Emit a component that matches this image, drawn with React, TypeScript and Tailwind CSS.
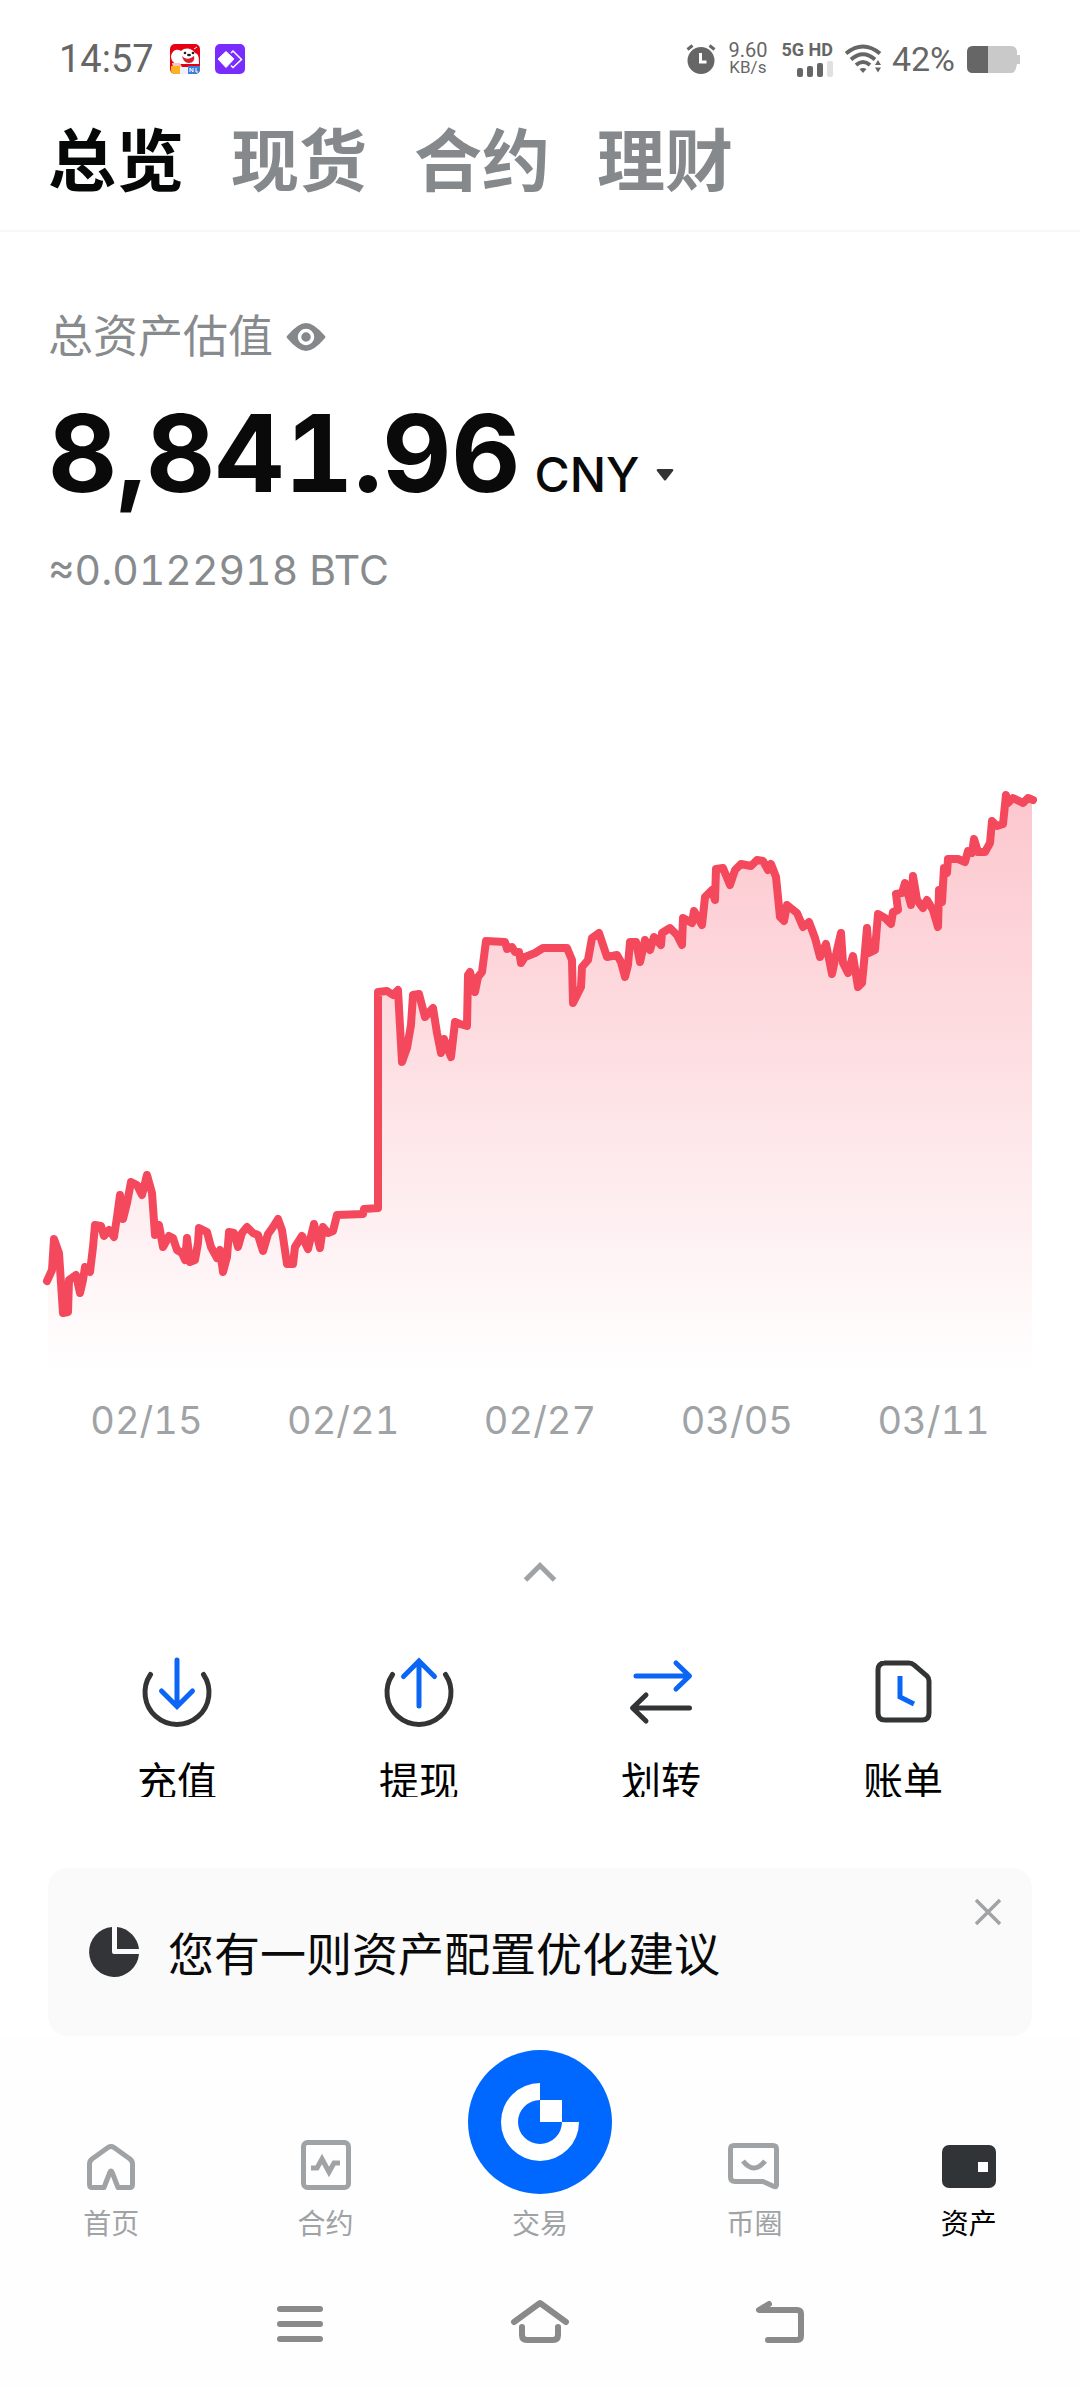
import { useState } from "react";
import type { ReactNode } from "react";

const tabs = ["总览", "现货", "合约", "理财"];
const dates = ["02/15", "02/21", "02/27", "03/05", "03/11"];

// x,y pairs on a 1080 x 616 canvas
const trend =
    "47,521 52,510 54,479 59,493 63,553 68,552 69,520 76,515 80,533 83,520 85,507 90,512 93,487 95,465 101,466 " +
    "104,476 109,470 114,477 117,457 120,435 123,459 127,443 131,422 137,425 142,435 147,415 152,433 155,475 " +
    "159,465 163,487 169,476 173,478 177,490 182,493 185,500 187,478 190,502 195,500 198,483 199,468 207,472 " +
    "211,487 217,498 220,490 223,512 227,497 229,472 234,473 238,487 242,473 247,467 253,473 258,475 263,491 " +
    "268,474 273,467 278,459 282,470 287,504 293,504 295,487 302,476 308,489 314,464 320,488 323,467 328,473 " +
    "333,471 337,455 363,454 364,449 378,448 378,232 387,231 393,235 398,230 402,302 407,288 411,265 413,235 " +
    "419,234 425,257 433,248 437,273 441,293 444,279 451,297 455,262 460,264 467,266 468,215 470,212 475,232 " +
    "478,217 482,212 486,181 505,182 507,189 512,187 515,192 519,192 521,203 525,197 535,193 543,188 567,188 " +
    "572,200 573,243 581,227 582,207 588,200 592,178 599,173 607,197 617,195 621,202 625,217 628,205 630,182 " +
    "636,182 640,202 645,180 650,190 654,177 661,185 662,173 670,168 677,175 682,185 683,158 692,163 694,151 " +
    "702,165 705,137 712,130 715,140 716,109 723,108 730,125 735,110 741,104 751,106 757,100 763,101 768,110 " +
    "771,104 776,117 780,157 784,161 787,145 797,153 803,167 809,162 815,178 820,197 826,184 832,214 837,190 " +
    "841,173 843,203 848,213 853,196 858,227 862,223 864,202 867,168 869,193 875,190 878,154 885,158 891,164 " +
    "893,152 898,150 896,134 902,133 905,123 911,145 913,116 917,140 923,148 927,140 933,150 938,167 939,130 " +
    "942,142 944,108 947,113 948,99 958,99 965,102 968,91 972,93 974,79 978,92 985,92 990,83 992,61 997,66 " +
    "1003,64 1006,35 1008,43 1013,38 1023,43 1028,38 1033,40";

function StatusBar() {
    return (
        <div className="flex h-[118px] items-center justify-between pr-[60px] pl-[59px] font-[Roboto,sans-serif] text-[#666666]">
            <div className="flex items-center">
                <span className="text-[38px]">14:57</span>
                <svg className="ml-4 size-[30px]" viewBox="0 0 30 30">
                    <rect width="30" height="30" rx="5" fill="#e60012" />
                    <path d="M1 12C3 5 8 5 11 7C15 3 22 4 25 9C29 10 29 14 29 20H7C3 19 1 16 1 12Z" fill="#fff" />
                    <path d="M2 19h8l2 4H3z" fill="#f3c7bd" />
                    <path d="M12 12c4 4 8 3 12 0c1 4-1 7-5 7s-6-3-7-7z" fill="#d8212b" />
                    <circle cx="15" cy="9" r="1.3" fill="#222" />
                    <circle cx="23" cy="9" r="1.3" fill="#222" />
                    <ellipse cx="19" cy="11" rx="2" ry="1.3" fill="#222" />
                    <path d="M24 5l3-2" stroke="#fff" strokeWidth="1" />
                    <path d="M1 22h9v8H5q-4 0-4-4z" fill="#fbb321" />
                    <path d="M10 23h8v7h-8z" fill="#eef3fb" />
                    <path d="M18 22h12v3q0 5-5 5h-7z" fill="#3f7fd8" />
                    <path d="M20 28v-4l3 4v-4M26 24v4h2" stroke="#fff" strokeWidth="1" fill="none" />
                </svg>
                <svg className="ml-[15px] size-[30px]" viewBox="0 0 30 30">
                    <rect width="30" height="30" rx="5" fill="#7a2cff" />
                    <path d="M11 7.500L19 15L11 23.500L3 15Z" fill="#fff" stroke="#fff" strokeLinejoin="round" />
                    <path d="M16 9l2-2 8.500 8.500-8.500 8-2-2" fill="none" stroke="#fff" strokeWidth="1.500" />
                </svg>
            </div>
            <div className="flex items-center">
                <svg className="h-[30px] w-[30px]" viewBox="0 0 30 30">
                    <circle cx="15" cy="16.500" r="13.500" fill="#666" />
                    <path d="M1.500 5.500L6.500 1.500M28.500 5.500L23.500 1.500" stroke="#666" strokeWidth="3" />
                    <path d="M14.500 9v9h6" fill="none" stroke="#fff" strokeWidth="3" />
                </svg>
                <div className="ml-3 flex flex-col items-center">
                    <span className="text-[20px] leading-[17px]">9.60</span>
                    <span className="text-[17px] leading-[17px]">KB/s</span>
                </div>
                <div className="ml-[14px] flex flex-col items-end">
                    <span className="text-[18px] leading-4 font-bold">5G HD</span>
                    <svg className="mt-[3px] h-4 w-9" viewBox="0 0 36 16">
                        <rect x="0" y="7" width="6" height="9" rx="2" fill="#666" />
                        <rect x="10" y="5" width="6" height="11" rx="2" fill="#666" />
                        <rect x="20" y="2" width="6" height="14" rx="2" fill="#666" />
                        <rect x="30" y="0" width="6" height="16" rx="2" fill="#e0e0e0" />
                    </svg>
                </div>
                <svg className="ml-3 h-[30px] w-[37px]" viewBox="0 0 37 30">
                    <g fill="none" stroke="#666" strokeWidth="4">
                        <path d="M1 9.500Q18 -4.500 35 9.500" />
                        <path d="M6 15.500Q18 5 30 15.500" />
                        <path d="M11 21Q18 15 25 21" />
                    </g>
                    <path d="M14.500 25Q18 23 21.500 25L18 29Z" fill="#666" />
                    <path d="M33 16l3 5h-6zM33 28.500l3-5h-6z" fill="#666" />
                </svg>
                <span className="ml-[10px] text-[34px]">42%</span>
                <svg className="ml-3 h-[27px] w-[53px]" viewBox="0 0 53 27">
                    <path d="M6 0H44Q49 0 50 5V9H53V18H50L49 22Q48 27 44 27H6Q0 27 0 21V6Q0 0 6 0Z" fill="#c9c9c9" />
                    <path d="M6 0H21V27H6Q0 27 0 21V6Q0 0 6 0Z" fill="#666" />
                </svg>
            </div>
        </div>
    );
}

function Chart() {
    return (
        <svg className="mt-40 block w-full" viewBox="0 0 1080 616">
            <defs>
                <linearGradient id="fade" x1="0" y1="35" x2="0" y2="616" gradientUnits="userSpaceOnUse">
                    <stop offset="0" stopColor="#f5465d" stopOpacity="0.3" />
                    <stop offset="0.4" stopColor="#f5465d" stopOpacity="0.19" />
                    <stop offset="1" stopColor="#f5465d" stopOpacity="0" />
                </linearGradient>
            </defs>
            <polygon points={`48,616 48,521 ${trend.replace("1033,40", "1032,40")} 1032,616`} fill="url(#fade)" />
            <polyline
                points={trend}
                fill="none"
                stroke="#f4485d"
                strokeWidth="8"
                strokeLinecap="round"
                strokeLinejoin="round"
            />
        </svg>
    );
}

function Action({ label, children }: { label: string; children: ReactNode }) {
    return (
        <button className="flex flex-col items-center">
            <svg className="size-[72px]" viewBox="0 0 72 72" fill="none" strokeWidth="5">
                {children}
            </svg>
            <span className="mt-7 h-[41px] overflow-hidden text-[40px] leading-[52px] text-black">{label}</span>
        </button>
    );
}

function NavItem({ label, active, children }: { label: string; active?: boolean; children: ReactNode }) {
    return (
        <a href="#" className="flex flex-col items-center gap-[14px]">
            <svg className="size-14" viewBox="0 0 56 56" fill="none" stroke="#a0a3a5" strokeWidth="5">
                {children}
            </svg>
            <span className={active ? "text-[28px] leading-8 text-black" : "text-[28px] leading-8 text-[#a0a3a5]"}>
                {label}
            </span>
        </a>
    );
}

export default function App() {
    const [tab, setTab] = useState("总览");
    const [currency, setCurrency] = useState("CNY");

    return (
        <div className="bg-white font-['Inter','Noto_Sans_CJK_SC',sans-serif] text-[#0a0a0a]">
            <StatusBar />

            <div className="flex gap-[47px] border-b-2 border-[#f8f8f8] pb-[26px] pl-12">
                {tabs.map((t) => (
                    <button
                        key={t}
                        onClick={() => setTab(t)}
                        className={
                            t === tab
                                ? "text-[68px] leading-[86px] font-bold text-[#060807]"
                                : "text-[68px] leading-[86px] font-bold text-[#85898c]"
                        }
                    >
                        {t}
                    </button>
                ))}
            </div>

            <div className="pt-[75px] pl-12">
                <div className="flex items-center">
                    <span className="text-[45px] leading-[60px] text-[#888b8d]">总资产估值</span>
                    <button aria-label="显示资产" className="ml-[13px]">
                        <svg className="h-7 w-10" viewBox="0 0 40 28">
                            <path d="M1 13Q12 0 20 0T39 13Q40 14 39 15Q28 28 20 28T1 15Q0 14 1 13Z" fill="#85888a" />
                            <circle cx="20" cy="14" r="6.500" fill="#85888a" stroke="#fff" strokeWidth="3.500" />
                        </svg>
                    </button>
                </div>
                <div className="mt-[26px] flex items-baseline">
                    <span className="text-[107px] leading-[120px] font-bold tabular-nums">8,841.96</span>
                    <div className="ml-[14px] flex items-center">
                        <select
                            aria-label="计价货币"
                            value={currency}
                            onChange={(e) => setCurrency(e.target.value)}
                            className="appearance-none bg-transparent text-[48px] leading-[60px] font-medium"
                        >
                            <option>CNY</option>
                            <option>USD</option>
                        </select>
                        <svg className="ml-4 h-3 w-[18px]" viewBox="0 0 18 12">
                            <path d="M2 0H16Q18 0 17 2L10 11Q9 12 8 11L1 2Q0 0 2 0Z" fill="#333" />
                        </svg>
                    </div>
                </div>
                <div className="mt-[27px] text-[41px] leading-[60px] text-[#888b8d] tabular-nums">≈0.0122918 BTC</div>
            </div>

            <Chart />

            <div className="mt-5 grid grid-cols-5 px-12 text-center text-[38px] leading-[48px] text-[#a0a3a5] tabular-nums">
                {dates.map((d) => (
                    <span key={d}>{d}</span>
                ))}
            </div>

            <button aria-label="收起" className="mx-auto mt-[108px] block size-10">
                <svg viewBox="0 0 40 40" fill="none" stroke="#a0a3a5" strokeWidth="5">
                    <path d="M5.500 28L20 13.500L34.500 28" />
                </svg>
            </button>

            <div className="mt-16 grid grid-cols-4 px-14">
                <Action label="充值">
                    <path d="M9.500 18.500A32 32 0 1 0 62.500 18.500" stroke="#333435" strokeLinecap="round" />
                    <path d="M36 4V50M20.500 35L36 50.500L51.500 35" stroke="#0b66f5" strokeLinecap="round" />
                </Action>
                <Action label="提现">
                    <path d="M9.500 18.500A32 32 0 1 0 62.500 18.500" stroke="#333435" strokeLinecap="round" />
                    <path d="M36 50V5M20.500 20.500L36 5L51.500 20.500" stroke="#0b66f5" strokeLinecap="round" />
                </Action>
                <Action label="划转">
                    <g strokeLinecap="round" strokeLinejoin="round">
                        <path d="M11 20H64M51 7L64.500 20L51 33" stroke="#0b66f5" />
                        <path d="M64.500 52H8M21 39L7.500 52L21 65" stroke="#333435" />
                    </g>
                </Action>
                <Action label="账单">
                    <path
                        d="M17 7H42Q45 7 47 9L60 20Q62 22 62 25V57Q62 64 55 64H18Q11 64 11 57V14Q11 7 18 7Z"
                        stroke="#333435"
                    />
                    <path d="M33 20V41L47 48" stroke="#0b66f5" />
                </Action>
            </div>

            <div className="mx-12 mt-[71px] flex h-[168px] items-center rounded-[20px] bg-[#fafafa] pr-7 pl-10">
                <svg className="size-[52px]" viewBox="0 0 52 52" fill="#333438">
                    <path d="M24 1A25 25 0 1 0 51 28H26Q24 28 24 26Z" />
                    <path d="M29 1A25 25 0 0 1 51 23H29Z" />
                </svg>
                <span className="ml-7 pt-1 text-[46px] leading-[60px]">您有一则资产配置优化建议</span>
                <button aria-label="关闭" className="mt-7 ml-auto self-start">
                    <svg className="size-8" viewBox="0 0 32 32" stroke="#a0a3a5" strokeWidth="3.500">
                        <path d="M4 4L28 28M28 4L4 28" />
                    </svg>
                </button>
            </div>

            <nav className="grid grid-cols-5 items-end bg-[#fefefe] px-1 pt-[14px]">
                <NavItem label="首页">
                    <path
                        d="M14 49.500H9Q6.500 49.500 6.500 46V26Q6.500 23 9 21L25 9.500Q28 7.500 31 9.500L47 21Q49.500 23 49.500 26V46Q49.500 49.500 47 49.500H35L29 34Q28 32 27 34L21 49.500Z"
                        strokeLinejoin="round"
                    />
                </NavItem>
                <NavItem label="合约">
                    <rect x="5.500" y="4.500" width="45" height="45" rx="4" />
                    <path d="M13 30H19L24 21L31 34L36 25H42" />
                </NavItem>
                <a href="#" className="flex flex-col items-center gap-[14px]">
                    <svg className="size-36" viewBox="0 0 144 144">
                        <circle cx="72" cy="72" r="72" fill="#0068ff" />
                        <path
                            d="M72 33A39 39 0 1 0 111 72H94A22 22 0 1 1 72 50ZM72 50H94V72H72Z"
                            fill="#fff"
                        />
                    </svg>
                    <span className="text-[28px] leading-8 text-[#a0a3a5]">交易</span>
                </a>
                <NavItem label="币圈">
                    <path
                        d="M8 7.500H47Q50.500 7.500 50.500 11V47Q50.500 49.500 48 48.500L37 43.500H9Q4.500 43.500 4.500 39V11Q4.500 7.500 8 7.500Z"
                        strokeLinejoin="round"
                    />
                    <path d="M17 23Q28 37 39 23" />
                </NavItem>
                <NavItem label="资产" active>
                    <rect x="1" y="7" width="54" height="43" rx="7" fill="#313437" stroke="none" />
                    <rect x="37" y="24" width="10" height="10" fill="#fff" stroke="none" />
                </NavItem>
            </nav>

            <div className="grid grid-cols-3 justify-items-center bg-[#fefefe] px-[180px] pt-[50px] pb-[34px]">
                <button aria-label="最近任务">
                    <svg className="size-16" viewBox="0 0 64 64" stroke="#8a8a8a" strokeWidth="6" strokeLinecap="round">
                        <path d="M12 19H52M12 34H52M12 49H52" />
                    </svg>
                </button>
                <button aria-label="主屏幕">
                    <svg
                        className="size-16"
                        viewBox="0 0 64 64"
                        fill="none"
                        stroke="#8a8a8a"
                        strokeWidth="6"
                        strokeLinecap="round"
                        strokeLinejoin="round"
                    >
                        <path d="M6 32L32 13L58 32M14 37V45Q14 50 19 50H45Q50 50 50 45V37" />
                    </svg>
                </button>
                <button aria-label="返回">
                    <svg
                        className="size-16"
                        viewBox="0 0 64 64"
                        fill="none"
                        stroke="#8a8a8a"
                        strokeWidth="6"
                        strokeLinecap="round"
                        strokeLinejoin="round"
                    >
                        <path d="M21 14L11 20H49Q53 20 53 24V46Q53 50 49 50H20" />
                    </svg>
                </button>
            </div>
        </div>
    );
}
